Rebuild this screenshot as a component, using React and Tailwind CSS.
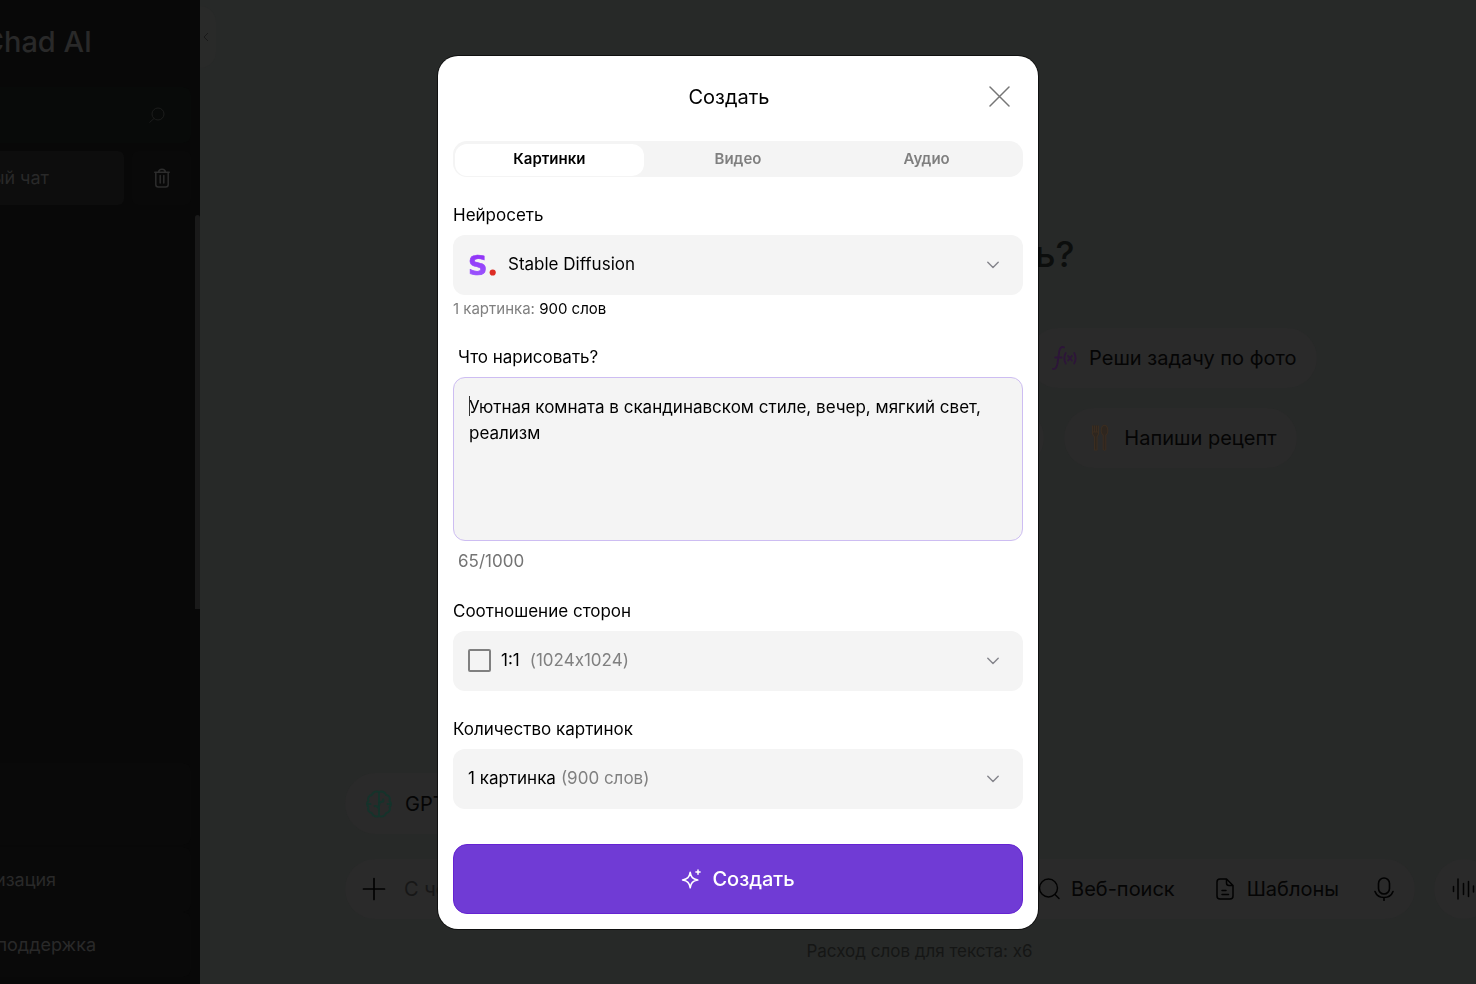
import React, { useState } from 'react';

const ChevronDown = () => (
  <svg className="ml-auto h-3 w-3 shrink-0 pointer-events-none" viewBox="0 0 12 12" fill="none" stroke="#85858c" strokeWidth="1.4" strokeLinecap="round" strokeLinejoin="round" aria-hidden="true">
    <path d="M.8 3.2 6 8.6l5.200-5.400" />
  </svg>
);

const StabilityLogo = () => (
  <svg className="h-7 w-7 shrink-0" viewBox="0 0 28 28" aria-hidden="true">
    <defs>
      <linearGradient id="stability" x1="0" y1="0" x2="0" y2="1">
        <stop offset="0" stopColor="#8f2cf5" />
        <stop offset="1" stopColor="#9c5cff" />
      </linearGradient>
    </defs>
    <text x="-1" y="24" fontFamily="DejaVu Sans" fontWeight="700" fontSize="27" fill="url(#stability)" stroke="url(#stability)" strokeWidth=".6">S</text>
    <circle cx="23.700" cy="21.500" r="3.100" fill="#dd2c24" />
  </svg>
);

const SparkIcon = () => (
  <svg className="h-5 w-5 shrink-0" viewBox="0 0 20 20" fill="none" stroke="#fff" strokeWidth="1.5" strokeLinejoin="round" strokeLinecap="round" aria-hidden="true">
    <path d="M9.200 3.200c.8 5 2.400 6.900 7.600 7.800-5.200.9-6.800 2.800-7.600 7.800-.8-5-2.600-6.900-7.700-7.800 5.100-.9 6.900-2.800 7.700-7.800Z" />
    <path d="M17 1v4.200M14.900 3.100h4.200" />
  </svg>
);

const BrainIcon = () => (
  <svg className="h-7 w-7 shrink-0" viewBox="0 0 28 28" fill="none" stroke="#15332b" strokeWidth="2" strokeLinecap="round" strokeLinejoin="round" aria-hidden="true">
    <path d="M14 2c-2-1.200-6-.6-7.200 3-3 .4-4.400 3.200-3.300 6-2 1.500-2 4.500 0 6-1.100 2.800.3 5.600 3.300 6 1.200 3.600 5.200 4.200 7.200 3M14 2c2-1.200 6-.6 7.200 3 3 .4 4.400 3.200 3.300 6 2 1.500 2 4.500 0 6 1.100 2.800-.3 5.600-3.300 6-1.200 3.600-5.200 4.200-7.200 3M14 2v24" />
    <path d="M14 20.500c0-3-1.200-4.500-4.300-4.500M14 15.500c0-3 1.200-4 4.300-4M3.500 14h2M22.500 14h2M18.300 11.500V9.500" />
  </svg>
);

const FunctionIcon = () => (
  <svg className="h-6 w-[25px] shrink-0" viewBox="0 0 25 24" fill="none" stroke="#2d1539" strokeWidth="1.800" strokeLinecap="round" aria-hidden="true">
    <path d="M12 1.300C9 .2 7.700 2.500 7.200 5.500L5.500 17.500C4.900 21 3.500 23.400.9 22.800M3.200 11.500h6.300" />
    <path d="M13.700 7c-1.600 3-1.600 7.500 0 10.500M22.200 7c1.600 3 1.600 7.500 0 10.500M16.200 10l3.600 4.500M19.800 10l-3.600 4.500" />
  </svg>
);

const CutleryIcon = () => (
  <svg className="h-7 w-[18px] shrink-0" viewBox="0 0 18 28" fill="#2e261f" stroke="#3b2d20" strokeWidth="1.100" strokeLinejoin="round" aria-hidden="true">
    <path d="M1.500 1.500v8.500l2 3V26h2.500V13l1.500-3V1.500M3.500 1.500v6.500M5.500 1.500v6.500M1.500 8h6" />
    <path d="M12.200 11V25.500q1.300 1.500 2.600 0V11C18 9 17 1.200 13.500 1.200S9 9 12.200 11Z" />
  </svg>
);

const TrashIcon = () => (
  <svg className="h-5 w-4" viewBox="0 0 16 20" fill="none" stroke="#2d2d2d" strokeWidth="1.500" strokeLinecap="round" strokeLinejoin="round" aria-hidden="true">
    <path d="M.8 4.200h14.400M4.500 4.200C5 .3 11 .3 11.500 4.200M1.800 4.200v12.300q0 2.500 2.500 2.500h7.400q2.500 0 2.500-2.500V4.200M6.200 7.500V15M9.800 7.500V15" />
  </svg>
);

const SearchIcon = () => (
  <svg className="h-6 w-6 shrink-0" viewBox="0 0 24 24" fill="none" stroke="#020202" strokeWidth="1.400" strokeLinecap="round" aria-hidden="true">
    <circle cx="11.500" cy="11" r="9" />
    <path d="m18 17.500 4 4" />
  </svg>
);

const DocIcon = () => (
  <svg className="h-6 w-6 shrink-0" viewBox="0 0 24 24" fill="none" stroke="#020202" strokeWidth="1.500" strokeLinecap="round" strokeLinejoin="round" aria-hidden="true">
    <path d="M13.500 2H7Q4 2 4 5v14q0 3 3 3h10q3 0 3-3V8.500Zm0 0v4q0 2.500 2.500 2.500h4M9 13.500h4M9 17.500h6.500" />
  </svg>
);

const MicIcon = () => (
  <svg className="h-6 w-5 shrink-0" viewBox="0 0 20 24" fill="none" stroke="#020202" strokeWidth="1.600" strokeLinecap="round" aria-hidden="true">
    <rect x="4.500" y="1" width="11" height="16" rx="5.500" />
    <path d="M1 14.500c1.500 4 4.600 6 9 6s7.500-2 9-6M10 20.500v3" />
  </svg>
);

const WaveIcon = () => (
  <svg className="h-6 w-6 shrink-0" viewBox="0 0 24 24" stroke="#020202" strokeWidth="1.500" strokeLinecap="round" aria-hidden="true">
    <path d="M1.500 9.500v5M6 2v20M11.500 6.500v11M16.500 4.500v15M21.500 9v6" />
  </svg>
);

const Sidebar = () => (
  <aside className="flex w-[200px] shrink-0 flex-col overflow-hidden bg-[#080808] text-[#292929]">
    <div className="mb-[3px] flex h-[84px] w-[92px] items-center justify-end text-[29px] font-medium whitespace-nowrap">Chad AI</div>
    <div className="mr-[9px] flex h-14 items-center justify-end rounded-r-lg bg-[#080a09] pr-[26px]">
      <button aria-label="Поиск">
        <svg className="h-4 w-4" viewBox="0 0 16 16" fill="none" stroke="#1c1d1c" strokeWidth="1" aria-hidden="true">
          <circle cx="9" cy="7" r="6" />
          <path d="m5 11.500-4.500 4" />
        </svg>
      </button>
    </div>
    <div className="mt-2 mr-[9px] flex h-[54px] gap-2">
      <button className="flex w-[124px] items-center rounded-r-md bg-[#0d0d0d] pr-[75px] text-lg">
        <span className="flex w-[49px] justify-end whitespace-nowrap">ый чат</span>
      </button>
      <button aria-label="Удалить" className="flex flex-1 items-center justify-center rounded-md bg-[#090909]">
        <TrashIcon />
      </button>
    </div>
    <div className="mt-[10px] h-[394px] w-[5px] self-end rounded-t-sm bg-[#1a1a1a]" />
    <div className="mt-auto mr-[9px] h-[82px] rounded-r-lg bg-[#090909]" />
    <a href="#personal" className="mt-[2px] mr-[9px] flex h-[65px] items-center rounded-r-lg bg-[#090909] text-lg">
      <span className="flex w-14 justify-end whitespace-nowrap">изация</span>
    </a>
    <a href="#support" className="mr-[9px] mb-[7px] flex h-[65px] items-center rounded-r-lg bg-[#090909] text-lg">
      <span className="flex w-24 justify-end whitespace-nowrap">поддержка</span>
    </a>
  </aside>
);

const Suggestion = ({ icon, children }) => (
  <button className="flex h-[60px] items-center gap-3 rounded-full bg-[#2a2a2a] pr-5 pl-6 text-xl whitespace-nowrap text-[#050505]">
    {icon}
    {children}
  </button>
);

const ChatPage = () => (
  <main className="relative min-w-0 flex-1 overflow-hidden bg-[#272928]">
    <button aria-label="Свернуть" className="absolute top-[6px] left-0 flex h-[62px] w-4 items-center rounded-r-2xl bg-[#292a29] pl-[3px]">
      <svg className="h-[10px] w-[6px]" viewBox="0 0 6 10" fill="none" stroke="#191919" aria-hidden="true">
        <path d="M5 1 1 5l4 4" />
      </svg>
    </button>
    <div className="-mr-[163px] flex h-full flex-col items-center">
      <h1 className="mt-[230px] w-[310px] text-right text-4xl leading-[48px] font-medium text-[#0c0e0d]">ь?</h1>
      <div className="mt-[50px] flex w-[794px] justify-end">
        <Suggestion icon={<FunctionIcon />}>Реши задачу по фото</Suggestion>
      </div>
      <div className="mt-5 flex w-[754px] justify-end gap-5">
        <div className="h-[60px] flex-1 rounded-full bg-[#2a2a2a]" />
        <Suggestion icon={<span className="flex w-6 justify-center"><CutleryIcon /></span>}>Напиши рецепт</Suggestion>
      </div>
      <div className="mt-auto flex w-[1149px]">
        <button className="flex h-[61px] w-60 items-center gap-3 rounded-full bg-[#2a2a2a] pl-5 text-xl text-[#050505]">
          <BrainIcon />
          GPT
        </button>
      </div>
      <div className="mt-[25px] flex w-[1149px] gap-[19px]">
        <div className="flex h-[60px] flex-1 items-center rounded-full bg-[#2a2a2a] pr-[21px] pl-[17px] text-xl text-[#050505]">
          <button aria-label="Добавить">
            <svg className="h-6 w-6" viewBox="0 0 24 24" stroke="#020202" strokeWidth="1.700" strokeLinecap="round" aria-hidden="true">
              <path d="M12 1.500v21M1.500 12h21" />
            </svg>
          </button>
          <input aria-label="Сообщение" placeholder="С че" className="ml-[18px] min-w-0 flex-1 bg-transparent outline-none placeholder:text-[#171717]" />
          <button className="flex items-center gap-[10px] whitespace-nowrap"><SearchIcon />Веб-поиск</button>
          <button className="ml-[38px] flex items-center gap-[10px]"><DocIcon />Шаблоны</button>
          <button aria-label="Диктовать" className="ml-[35px]"><MicIcon /></button>
        </div>
        <button aria-label="Голос" className="flex h-[60px] w-[60px] items-center justify-center rounded-full bg-[#2a2a2a]">
          <WaveIcon />
        </button>
      </div>
      <p className="mt-5 mb-5 text-[17px] leading-[25px] text-[#151615]">Расход слов для текста: x6</p>
    </div>
  </main>
);

const SelectField = ({ id, label, icon, option, hint, note }) => (
  <div className="mt-[26px]">
    <label htmlFor={id} className="block text-[17px] leading-6">{label}</label>
    <div className="mt-2 flex h-[60px] items-center rounded-xl bg-[#f4f4f4] pr-6 pl-[15px] text-[17px]">
      {icon}
      <select id={id} className="field-sizing-content appearance-none bg-transparent outline-none">
        <option>{option}</option>
      </select>
      {hint}
      <ChevronDown />
    </div>
    {note}
  </div>
);

const TABS = ['Картинки', 'Видео', 'Аудио'];

const CreateDialog = () => {
  const [tab, setTab] = useState('Картинки');
  const [prompt, setPrompt] = useState('Уютная комната в скандинавском стиле, вечер, мягкий свет, реализм');

  return (
    <div className="fixed inset-0 flex items-center justify-center">
      <div role="dialog" aria-labelledby="create-title" className="w-[600px] rounded-[20px] bg-white p-[15px] text-black ring-1 ring-black/60">
        <div className="flex h-[52px] items-center pr-[13px] pl-4">
          <h2 id="create-title" className="flex-1 text-center text-xl">Создать</h2>
          <button aria-label="Закрыть">
            <svg className="h-[21px] w-[21px]" viewBox="0 0 21 21" stroke="#767676" strokeWidth="1.500" strokeLinecap="round" aria-hidden="true">
              <path d="m1 1 19 19M20 1 1 20" />
            </svg>
          </button>
        </div>

        <div role="tablist" className="mt-[18px] grid h-9 grid-cols-3 rounded-[14px] bg-[#f4f4f4] px-[2px] pt-[3px] pb-px">
          {TABS.map((name) => (
            <button
              key={name}
              role="tab"
              aria-selected={tab === name}
              onClick={() => setTab(name)}
              className={`rounded-xl text-[15px] font-semibold ${tab === name ? 'bg-white text-black' : 'text-[#7f7f7f]'}`}
            >
              {name}
            </button>
          ))}
        </div>

        <SelectField
          id="model"
          label="Нейросеть"
          icon={<span className="mr-[11px] ml-px"><StabilityLogo /></span>}
          option="Stable Diffusion"
          note={<p className="mt-1 text-[15px] leading-5 text-[#808080]">1 картинка: <span className="text-black">900 слов</span></p>}
        />

        <div className="mt-[26px]">
          <label htmlFor="prompt" className="block pl-[5px] text-[17px] leading-6">Что нарисовать?</label>
          <div className="relative mt-2">
            <textarea
              id="prompt"
              maxLength={1000}
              value={prompt}
              onChange={(e) => setPrompt(e.target.value)}
              className="block h-[164px] w-full resize-none rounded-xl border border-[#cdbdf2] bg-[#f4f4f4] px-[15px] py-4 text-[17px] leading-[26px] outline-none"
            />
            <span className="absolute top-[19px] left-4 h-5 w-px bg-[#333]" />
          </div>
          <p className="mt-2 pl-[5px] text-[17px] leading-6 text-[#747474]">{prompt.length}/1000</p>
        </div>

        <SelectField
          id="ratio"
          label="Соотношение сторон"
          icon={<span className="mr-[10px] h-[23px] w-[23px] rounded-xs border-2 border-[#808080]" />}
          option="1:1"
          hint={<span className="ml-[10px] text-[#808080] [font-feature-settings:'calt'_0]">(1024x1024)</span>}
        />

        <SelectField
          id="count"
          label="Количество картинок"
          option="1 картинка"
          hint={<span className="ml-[5px] text-[#808080]">(900 слов)</span>}
        />

        <button className="mt-[35px] flex h-[70px] w-full items-center justify-center gap-[11px] rounded-[14px] border border-[#6523d2] bg-[#703bd5] text-xl font-medium text-white">
          <SparkIcon />
          Создать
        </button>
      </div>
    </div>
  );
};

const App = () => (
  <div className="flex h-screen overflow-hidden bg-[#272928] font-[Inter,sans-serif]">
    <Sidebar />
    <ChatPage />
    <CreateDialog />
  </div>
);

export default App;
